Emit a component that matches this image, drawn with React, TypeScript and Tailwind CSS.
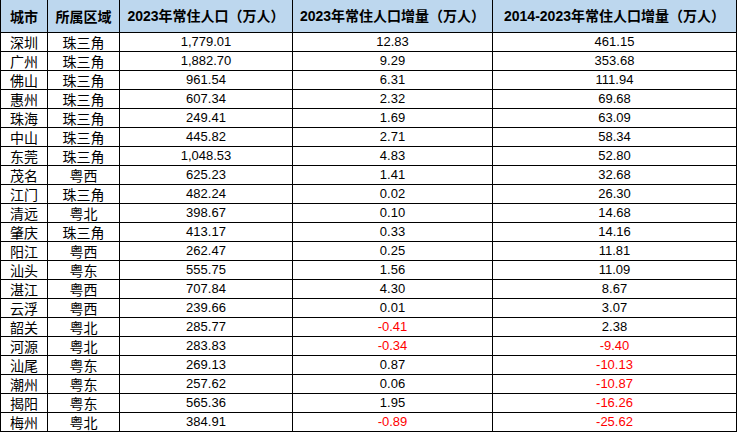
import React from "react";

const rows: [string, string, string, string, string][] = [
  ["深圳", "珠三角", "1,779.01", "12.83", "461.15"],
  ["广州", "珠三角", "1,882.70", "9.29", "353.68"],
  ["佛山", "珠三角", "961.54", "6.31", "111.94"],
  ["惠州", "珠三角", "607.34", "2.32", "69.68"],
  ["珠海", "珠三角", "249.41", "1.69", "63.09"],
  ["中山", "珠三角", "445.82", "2.71", "58.34"],
  ["东莞", "珠三角", "1,048.53", "4.83", "52.80"],
  ["茂名", "粤西", "625.23", "1.41", "32.68"],
  ["江门", "珠三角", "482.24", "0.02", "26.30"],
  ["清远", "粤北", "398.67", "0.10", "14.68"],
  ["肇庆", "珠三角", "413.17", "0.33", "14.16"],
  ["阳江", "粤西", "262.47", "0.25", "11.81"],
  ["汕头", "粤东", "555.75", "1.56", "11.09"],
  ["湛江", "粤西", "707.84", "4.30", "8.67"],
  ["云浮", "粤西", "239.66", "0.01", "3.07"],
  ["韶关", "粤北", "285.77", "-0.41", "2.38"],
  ["河源", "粤北", "283.83", "-0.34", "-9.40"],
  ["汕尾", "粤东", "269.13", "0.87", "-10.13"],
  ["潮州", "粤东", "257.62", "0.06", "-10.87"],
  ["揭阳", "粤东", "565.36", "1.95", "-16.26"],
  ["梅州", "粤北", "384.91", "-0.89", "-25.62"],
];

const cjk = "font-['Noto_Sans_CJK_SC',sans-serif]";
const num = "font-['Liberation_Sans','Noto_Sans_CJK_SC',sans-serif] text-[13px]";

function NumCell({ v }: { v: string }) {
  const neg = v.startsWith("-");
  return (
    <td className={`border border-black text-center leading-none p-0 ${num} ${neg ? "text-[#ff0000]" : "text-black"}`}>
      {v}
    </td>
  );
}

export default function App() {
  return (
    <div className="w-[738px] h-[434px] bg-white overflow-hidden">
      <table className={`table-fixed border-collapse w-[736px] ${cjk} text-[14px] text-black`}>
        <colgroup>
          <col className="w-[47px]" />
          <col className="w-[72px]" />
          <col className="w-[173px]" />
          <col className="w-[200px]" />
          <col className="w-[244px]" />
        </colgroup>
        <thead>
          <tr className="h-[32px] bg-[#bdd7ee]">
            <th className="border border-black border-t-0 font-bold whitespace-nowrap leading-none p-0">城市</th>
            <th className="border border-black border-t-0 font-bold whitespace-nowrap leading-none p-0">所属区域</th>
            <th className="border border-black border-t-0 font-bold whitespace-nowrap leading-none p-0">
              <span className="font-['Liberation_Sans','Noto_Sans_CJK_SC',sans-serif]">2023</span>年常住人口（万人）
            </th>
            <th className="border border-black border-t-0 font-bold whitespace-nowrap leading-none p-0">
              <span className="font-['Liberation_Sans','Noto_Sans_CJK_SC',sans-serif]">2023</span>年常住人口增量（万人）
            </th>
            <th className="border border-black border-t-0 font-bold whitespace-nowrap leading-none p-0">
              <span className="font-['Liberation_Sans','Noto_Sans_CJK_SC',sans-serif]">2014-2023</span>年常住人口增量（万人）
            </th>
          </tr>
        </thead>
        <tbody>
          {rows.map((r) => (
            <tr key={r[0]} className="h-[19px]">
              <td className="border border-black text-center leading-none p-0">{r[0]}</td>
              <td className="border border-black text-center leading-none p-0">{r[1]}</td>
              <NumCell v={r[2]} />
              <NumCell v={r[3]} />
              <NumCell v={r[4]} />
            </tr>
          ))}
        </tbody>
      </table>
    </div>
  );
}
